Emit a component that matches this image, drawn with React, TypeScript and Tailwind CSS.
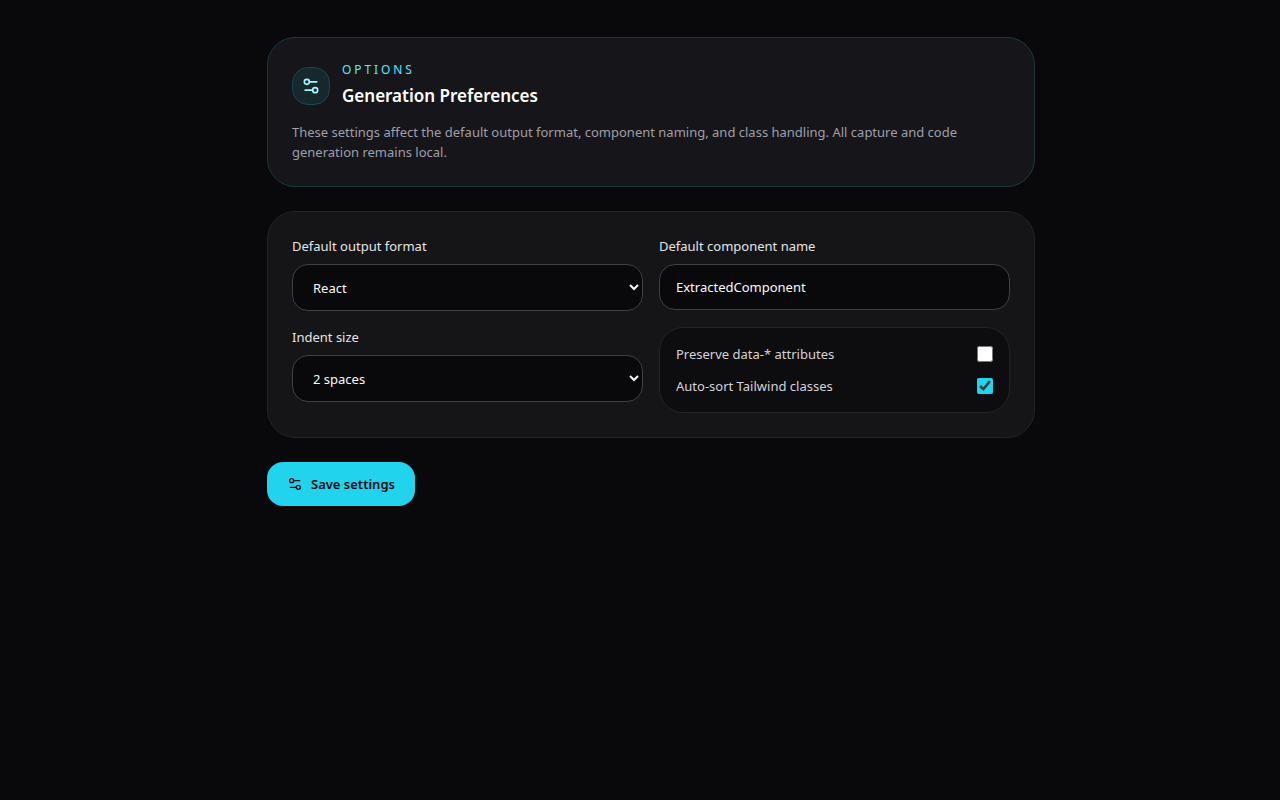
import { useState } from 'react';
import type { FormEvent } from 'react';
import { Settings2 } from 'lucide-react';

type Settings = {
  format: string;
  componentName: string;
  indent: string;
  preserveData: boolean;
  sortClasses: boolean;
};

const defaults: Settings = {
  format: 'react',
  componentName: 'ExtractedComponent',
  indent: '2',
  preserveData: false,
  sortClasses: true,
};

const fieldClass =
  'w-full rounded-2xl border border-zinc-700 bg-[#09090b] px-4 text-[13px] leading-5 text-zinc-50 outline-none focus:border-cyan-400';

export default function App() {
  const [settings, setSettings] = useState<Settings>(defaults);

  const update = (patch: Partial<Settings>) => setSettings((prev) => ({ ...prev, ...patch }));

  const handleSubmit = (e: FormEvent) => {
    e.preventDefault();
  };

  return (
    <main className="min-h-screen bg-[#09090b] pt-[37px] pb-10 pl-[22px] font-['Segoe_UI','Noto_Sans','Open_Sans',sans-serif] text-zinc-50">
      <form onSubmit={handleSubmit} className="mx-auto flex max-w-3xl flex-col items-start gap-6">
        {/* Header */}
        <section className="w-full rounded-[28px] border border-[#1a3a40] bg-[#16161a] p-6">
          <div className="flex items-center gap-3">
            <div className="flex size-[38px] items-center justify-center rounded-2xl border border-[#184651] bg-[#17282d] text-cyan-200">
              <Settings2 size={20} />
            </div>
            <div>
              <p className="text-xs tracking-[0.24em] text-cyan-300">OPTIONS</p>
              <h1 className="mt-1 text-[17px] leading-7 font-semibold text-white">Generation Preferences</h1>
            </div>
          </div>
          <p className="mt-3 text-[13px] leading-5 text-zinc-400">
            These settings affect the default output format, component naming, and class handling. All capture and code
            generation remains local.
          </p>
        </section>

        {/* Fields */}
        <section className="grid w-full gap-4 rounded-[28px] border border-[#242427] bg-[#151517] p-6 sm:grid-cols-2">
          <div>
            <label htmlFor="format" className="mb-2 block text-[13px] leading-5 text-zinc-200">
              Default output format
            </label>
            <select
              id="format"
              value={settings.format}
              onChange={(e) => update({ format: e.target.value })}
              className={`${fieldClass} block h-[47px]`}
            >
              <option value="react">React</option>
              <option value="html">HTML</option>
            </select>
          </div>

          <div>
            <label htmlFor="component-name" className="mb-2 block text-[13px] leading-5 text-zinc-200">
              Default component name
            </label>
            <input
              id="component-name"
              type="text"
              value={settings.componentName}
              onChange={(e) => update({ componentName: e.target.value })}
              className={`${fieldClass} block py-3`}
            />
          </div>

          <div>
            <label htmlFor="indent" className="mb-2 block text-[13px] leading-5 text-zinc-200">
              Indent size
            </label>
            <select
              id="indent"
              value={settings.indent}
              onChange={(e) => update({ indent: e.target.value })}
              className={`${fieldClass} block h-[47px]`}
            >
              <option value="2">2 spaces</option>
              <option value="4">4 spaces</option>
            </select>
          </div>

          <div className="flex flex-col gap-3 rounded-3xl border border-[#242427] bg-[#0d0d0f] p-4">
            <label className="flex items-center justify-between text-[13px] leading-5 text-zinc-300">
              Preserve data-* attributes
              <input
                type="checkbox"
                checked={settings.preserveData}
                onChange={(e) => update({ preserveData: e.target.checked })}
                className="size-4 accent-[#22d3ee]"
              />
            </label>
            <label className="flex items-center justify-between text-[13px] leading-5 text-zinc-300">
              Auto-sort Tailwind classes
              <input
                type="checkbox"
                checked={settings.sortClasses}
                onChange={(e) => update({ sortClasses: e.target.checked })}
                className="size-4 accent-[#22d3ee]"
              />
            </label>
          </div>
        </section>

        <button
          type="submit"
          className="inline-flex items-center gap-2 rounded-2xl bg-[#22d3ee] px-5 py-3 text-[13px] leading-5 font-semibold text-zinc-950 hover:bg-cyan-300"
        >
          <Settings2 size={16} /> Save settings
        </button>
      </form>
    </main>
  );
}
